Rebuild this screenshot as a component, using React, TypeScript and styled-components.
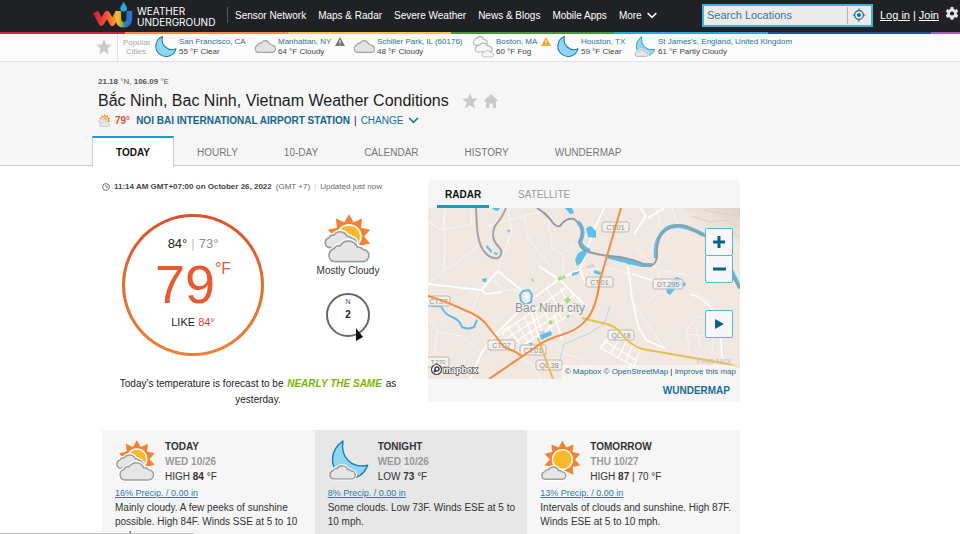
import React from "react";
import styled, { createGlobalStyle } from "styled-components";

const GlobalStyle = createGlobalStyle`
  *, *::before, *::after { box-sizing: border-box; }
  body {
    margin: 0;
    background: #fff;
    color: #222;
    font-family: "Liberation Sans", Arial, sans-serif;
    font-size: 10px;
  }
  button, input { font: inherit; margin: 0; }
  button { background: none; border: 0; padding: 0; cursor: pointer; }
  a { color: #1a6d97; text-decoration: none; }
  h1, h2, p { margin: 0; }
  svg { display: block; flex: none; }
`;

/* ---------- shell ---------- */

const Page = styled.div`
  height: 100vh;
  overflow: hidden;
`;

const Header = styled.header`
  display: flex;
  align-items: center;
  height: 32px;
  padding: 0 1px 2px 93px;
  background: #1f2125;
  color: #fff;
`;

const Rainbow = styled.div`
  height: 2px;
  background: linear-gradient(
    to right,
    #d3243c 0 13%,
    #f58a4e 13% 30%,
    #fcc14e 30% 47%,
    #4c9440 47% 64%,
    #2aa8e0 64% 80%,
    #24519f 80% 97%,
    #b05cb0 97%
  );
`;

const Brand = styled.a`
  display: flex;
  align-items: center;
  gap: 4px;
  width: 120px;
  color: #fff;
`;

const BrandName = styled.span`
  padding-top: 4px;
  font: 400 10px/11px Inter, sans-serif;
`;

const Nav = styled.nav`
  display: flex;
  align-items: center;
  gap: 12px;
  margin-left: 14px;
  padding-left: 7px;
  height: 16px;
  border-left: 1px solid #55575b;
`;

const NavLink = styled.a`
  color: #fff;
  white-space: nowrap;
`;

const NavButton = styled.button`
  display: flex;
  align-items: center;
  gap: 5px;
  color: #fff;
`;

const Account = styled.div`
  display: flex;
  align-items: center;
  margin-left: auto;
  font-size: 11px;
`;

const SearchBox = styled.form`
  display: flex;
  align-items: center;
  width: 171px;
  height: 23px;
  margin: 0 7px 0 0;
  border: 2px solid #3bb3de;
  background: #ebebeb;
`;

const SearchInput = styled.input`
  flex: 1;
  min-width: 0;
  height: 17px;
  padding: 0 3px;
  border: 0;
  border-right: 1px solid #b5b5b5;
  outline: 0;
  background: transparent;
  color: #22688f;
  &::placeholder { color: #3a769b; opacity: 1; }
`;

const LocateButton = styled.button`
  display: grid;
  place-items: center;
  width: 23px;
  color: #1a6d97;
`;

const AccountLink = styled.a`
  color: #fff;
  text-decoration: underline;
`;

const AccountDivider = styled.span`
  margin: 0 3px;
`;

const GearButton = styled.button`
  margin: 0 0 2px 6px;
  color: #e4e4e4;
`;

/* ---------- popular cities ---------- */

const CityStrip = styled.div`
  display: flex;
  align-items: center;
  height: 28px;
  padding: 0 0 2px 96px;
  border-bottom: 1px solid #e2e2e2;
  background: #fcfcfc;
`;

const StripLabel = styled.span`
  align-self: flex-start;
  width: 32px;
  height: 27px;
  margin: 0 6px 0 5px;
  padding: 4px 0 0 5px;
  border-left: 1px solid #e2e2e2;
  color: #a9a9a9;
  font-size: 8px;
  line-height: 9px;
  text-align: center;
`;

const CityList = styled.div`
  display: grid;
  grid-template-columns: 99px 99px 119px 85px 77px auto;
`;

const City = styled.a`
  display: flex;
  align-items: center;
  gap: 2px;
  color: #444;
  font-size: 8px;
  line-height: 10px;
  white-space: nowrap;
`;

const CityName = styled.span`
  display: flex;
  align-items: center;
  gap: 4px;
  height: 10px;
  color: #2b7396;
`;

/* ---------- location heading ---------- */

const LocationBand = styled.section`
  padding: 14px 0 0 92px;
  border-bottom: 1px solid #cfcfcf;
  background: #f6f6f6;
`;

const LocationInfo = styled.div`
  padding-left: 6px;
`;

const Coordinates = styled.p`
  color: #555;
  font-size: 8px;
  line-height: 12px;
`;

const TitleRow = styled.div`
  display: flex;
  align-items: center;
  gap: 5px;
  height: 25px;
`;

const Title = styled.h1`
  margin-right: 8px;
  color: #1b1b1b;
  font-size: 16px;
  font-weight: 400;
  line-height: 24px;
`;

const StationRow = styled.div`
  display: flex;
  align-items: center;
  height: 14px;
  margin-bottom: 9px;
  gap: 4px;
`;

const StationTemp = styled.strong`
  color: #e2532f;
  margin-right: 2px;
`;

const StationLink = styled.a`
  color: #14658f;
  font-weight: 700;
`;

const ChangeButton = styled.button`
  display: flex;
  align-items: center;
  gap: 5px;
  color: #1a6d97;
`;

const Tabs = styled.nav`
  display: flex;
  height: 30px;
  margin-bottom: -1px;
`;

const Tab = styled.a<{ $active?: boolean }>`
  display: flex;
  align-items: center;
  height: 31px;
  padding: 0 ${(p) => (p.$active ? "23px" : "22px")};
  border: 1px solid ${(p) => (p.$active ? "#cfcfcf" : "transparent")};
  border-top: 2px solid ${(p) => (p.$active ? "#1b9ac8" : "transparent")};
  border-bottom: 0;
  background: ${(p) => (p.$active ? "#fff" : "transparent")};
  color: ${(p) => (p.$active ? "#111" : "#777")};
  font-weight: ${(p) => (p.$active ? 700 : 400)};
`;

/* ---------- current conditions ---------- */

const Main = styled.main`
  max-width: 740px;
  padding: 14px 0 0 102px;
`;

const Columns = styled.div`
  display: grid;
  grid-template-columns: 1fr 1fr;
  gap: 14px;
  margin-bottom: 22px;
`;

const Updated = styled.p`
  display: flex;
  align-items: center;
  gap: 4px;
  height: 13px;
  margin-bottom: 21px;
  color: #666;
  font-size: 8px;
  white-space: nowrap;
  strong { color: #444; }
`;

const Conditions = styled.div`
  display: flex;
  gap: 51px;
  padding-left: 20px;
`;

const Dial = styled.div`
  display: flex;
  flex-direction: column;
  align-items: center;
  justify-content: center;
  width: 142px;
  height: 142px;
  padding-bottom: 6px;
  border: 3px solid transparent;
  border-radius: 50%;
  background: linear-gradient(#fff, #fff) padding-box,
    linear-gradient(#d9532d, #ef8237) border-box;
`;

const DialRange = styled.div`
  display: flex;
  gap: 4px;
  color: #222;
  font-size: 13px;
  line-height: 16px;
`;

const Muted = styled.span`
  color: #8d8d8d;
`;

const Pipe = styled.span`
  color: #c9c9c9;
`;

const Temperature = styled.div`
  display: flex;
  align-items: flex-start;
  margin: 5px 0 4px;
  color: #ea5a30;
  font-size: 54px;
  line-height: 54px;
`;

const TemperatureUnit = styled.span`
  font-size: 16px;
  line-height: 24px;
`;

const FeelsLike = styled.div`
  font-size: 11px;
  line-height: 14px;
  color: #222;
`;

const FeelsLikeValue = styled.span`
  color: #d1443c;
`;

const Side = styled.div`
  display: flex;
  flex-direction: column;
  align-items: center;
  width: 66px;
`;

const Phrase = styled.p`
  margin-bottom: 15px;
  line-height: 14px;
  white-space: nowrap;
  color: #333;
`;

const Wind = styled.div`
  position: relative;
  display: flex;
  flex-direction: column;
  align-items: center;
  width: 44px;
  height: 44px;
  padding-top: 3px;
  border: 2px solid #666;
  border-radius: 50%;
  font-weight: 700;
  line-height: 18px;
`;

const WindNorth = styled.span`
  color: #554466;
  font-size: 7px;
  font-weight: 400;
  line-height: 8px;
`;

const WindArrow = styled.svg`
  position: absolute;
  right: 5px;
  bottom: -6px;
`;

const Comparison = styled.p`
  margin-top: 20px;
  color: #222;
  line-height: 16px;
  text-align: center;
`;

const Trend = styled.em`
  padding: 0 1px;
  color: #7ab800;
  font-weight: 700;
`;

/* ---------- map panel ---------- */

const MapPanel = styled.section`
  align-self: start;
  background: #f6f6f6;
`;

const MapTabs = styled.div`
  display: flex;
  gap: 21px;
  height: 28px;
  padding-left: 9px;
`;

const MapTab = styled.button<{ $active?: boolean }>`
  padding: 4px 8px 0;
  border-bottom: 3px solid ${(p) => (p.$active ? "#1f97c4" : "transparent")};
  color: ${(p) => (p.$active ? "#111" : "#999")};
  font-weight: ${(p) => (p.$active ? 700 : 400)};
`;

const MapView = styled.div`
  position: relative;
  height: 171px;
`;

const MapControls = styled.div`
  position: absolute;
  top: 20px;
  right: 7px;
  display: flex;
  flex-direction: column;
  gap: 27px;
`;

const ZoomButtons = styled.div`
  display: flex;
  flex-direction: column;
`;

const MapButton = styled.button`
  display: grid;
  place-items: center;
  width: 28px;
  height: 28px;
  border: 1px solid #58b7d3;
  border-radius: 2px;
  background: #f7f7f7;
  & + & { margin-top: -1px; }
`;

const Attribution = styled.div`
  position: absolute;
  right: 0;
  bottom: 0;
  padding: 0 4px 0 3px;
  background: rgba(255, 255, 255, 0.5);
  font-size: 8px;
  line-height: 14px;
  white-space: nowrap;
`;

const MapboxMark = styled.div`
  position: absolute;
  left: 2px;
  bottom: 3px;
`;

const MapFooter = styled.div`
  display: flex;
  justify-content: flex-end;
  padding-right: 10px;
  font-weight: 700;
  line-height: 23px;
`;

/* ---------- forecast ---------- */

const Forecast = styled.section`
  display: grid;
  grid-template-columns: repeat(3, 1fr);
`;

const Card = styled.article<{ $shaded?: boolean }>`
  padding: 10px 0 10px 13px;
  background: ${(p) => (p.$shaded ? "#e7e7e7" : "#f6f6f6")};
  color: #333;
`;

const CardHead = styled.div`
  display: flex;
  gap: 8px;
  height: 46px;
  line-height: 15px;
`;

const CardTitle = styled.h2`
  color: #333;
  font-size: 10px;
  line-height: 14px;
`;

const CardDate = styled.p`
  color: #999;
  font-weight: 700;
`;

const Precip = styled.a`
  display: block;
  color: #2b7f9f;
  font-size: 9px;
  line-height: 15px;
  text-decoration: underline;
`;

const Summary = styled.p`
  font-size: 10px;
  line-height: 14px;
`;

const StatusEdge = styled.div`
  position: fixed;
  left: 0;
  bottom: 0;
  width: 194px;
  height: 1px;
  background: #c4c4c4;
`;

/* ---------- drawings ---------- */

type Sky = "moon" | "cloud" | "fog" | "mooncloud" | "mostly" | "partly";

const CLOUD =
  "M21 62A19 19 0 0 1 20 25A15 15 0 0 1 38 16A28 28 0 0 1 88 20A15 15 0 0 1 104 26A18 18 0 0 1 104 62Z";
const MOON = "M50 4A68 68 0 1 0 140 84A66 66 0 0 1 50 4Z";

function sunPoints(cx: number, cy: number) {
  return Array.from({ length: 20 }, (_, i) => {
    const r = i % 2 ? 44 : 65;
    const a = (i * Math.PI) / 10 - Math.PI / 2;
    return `${(cx + r * Math.cos(a)).toFixed(1)},${(cy + r * Math.sin(a)).toFixed(1)}`;
  }).join(" ");
}

function Cloud({ x, y, s, halo = "#fff" }: { x: number; y: number; s: number; halo?: string }) {
  return (
    <g transform={`translate(${x} ${y}) scale(${s})`} strokeLinejoin="round">
      <path d={CLOUD} fill={halo} stroke={halo} strokeWidth={13 / s} />
      <path d={CLOUD} fill="#e6e6e6" stroke="#9d9d9d" strokeWidth={5 / s} />
    </g>
  );
}

function Sun({ cx, cy }: { cx: number; cy: number }) {
  return (
    <g>
      <polygon points={sunPoints(cx, cy)} fill="#f58233" />
      <circle cx={cx} cy={cy} r="37" fill="#fff" />
      <circle cx={cx} cy={cy} r="32" fill="#fdb82a" />
    </g>
  );
}

function SkyIcon({ sky, size, halo }: { sky: Sky; size: number; halo?: string }) {
  return (
    <svg width={size} height={size} viewBox="0 0 146 146" aria-hidden="true">
      {sky === "moon" && (
        <path d={MOON} fill="#8fd6f3" stroke="#1c7fa9" strokeWidth="7" strokeLinejoin="round" />
      )}
      {sky === "cloud" && (
        <g transform="translate(2 28) scale(1.15 1.3)">
          <path d={CLOUD} fill="#e3e3e3" stroke="#a3a3a3" strokeWidth="6" />
        </g>
      )}
      {sky === "fog" && (
        <g fill="#f6f6f6" stroke="#b0b0b0" strokeWidth="7">
          <path d={CLOUD} transform="translate(4 0) scale(.8 1)" />
          <path d={CLOUD} transform="translate(14 44) scale(.98 1)" />
          <path d={CLOUD} transform="translate(62 94) scale(.66 .72)" />
        </g>
      )}
      {sky === "mooncloud" && (
        <>
          <path
            d="M52 4C8 34 4 90 40 120C76 146 122 132 138 88C84 100 42 62 52 4Z"
            fill="#8fd6f3"
            stroke="#1c7fa9"
            strokeWidth="5"
            strokeLinejoin="round"
          />
          <Cloud x={2} y={88} s={0.76} halo={halo} />
        </>
      )}
      {sky === "mostly" && (
        <>
          <Sun cx={76} cy={66} />
          <Cloud x={2} y={50} s={0.78} halo={halo} />
          <Cloud x={12} y={77} s={1} halo={halo} />
        </>
      )}
      {sky === "partly" && (
        <>
          <Sun cx={78} cy={68} />
          <Cloud x={2} y={92} s={0.72} halo={halo} />
        </>
      )}
    </svg>
  );
}

function Logo() {
  return (
    <svg width="40" height="28" viewBox="0 0 120 84" aria-hidden="true">
      <defs>
        <linearGradient id="w" x1="0" x2="1">
          <stop offset="0" stopColor="#d81f3f" />
          <stop offset=".5" stopColor="#ee5b2e" />
          <stop offset="1" stopColor="#fbb034" />
        </linearGradient>
        <linearGradient id="u" x1="0" x2="1">
          <stop offset="0" stopColor="#fdb931" />
          <stop offset=".35" stopColor="#7fb04c" />
          <stop offset=".6" stopColor="#1b7fc4" />
          <stop offset="1" stopColor="#2f6fd0" />
        </linearGradient>
      </defs>
      <path d="M8 33L25 66L42 38L58 66L76 33" fill="none" stroke="url(#w)" strokeWidth="17" strokeLinejoin="round" />
      <path d="M76 30V50Q76 71 92 71Q109 71 109 50V30" fill="none" stroke="url(#u)" strokeWidth="17" />
      <path d="M92 2C97 12 102 16 102 22A10 10 0 0 1 82 22C82 16 87 12 92 2Z" fill="#2ba6de" />
    </svg>
  );
}

function Chevron({ size = 10 }: { size?: number }) {
  return (
    <svg width={size} height="7" viewBox="0 0 10 7" fill="none" stroke="currentColor" strokeWidth="1.5" aria-hidden="true">
      <path d="M.6 1L5 5.4L9.4 1" />
    </svg>
  );
}

function Star({ size }: { size: number }) {
  return (
    <svg width={size} height={size} viewBox="0 0 20 20" fill="#cacaca" aria-hidden="true">
      <path d="M10 0L12.7 6.900L20 7.300L14.300 12L16.200 19.200L10 15.200L3.800 19.200L5.700 12L0 7.300L7.300 6.900Z" />
    </svg>
  );
}

function Home() {
  return (
    <svg width="16" height="16" viewBox="0 0 16 16" fill="#cacaca" aria-hidden="true">
      <path d="M8 1L15.5 8.3H13V15H9.7V10.5H6.3V15H3V8.3H.5Z" />
    </svg>
  );
}

function Target() {
  return (
    <svg width="14" height="14" viewBox="0 0 14 14" fill="none" stroke="currentColor" strokeWidth="1.2" aria-hidden="true">
      <circle cx="7" cy="7" r="4.4" />
      <path d="M7 .6V2.6M7 11.4V13.4M.6 7H2.6M11.4 7H13.4" />
      <circle cx="7" cy="7" r="2" fill="currentColor" stroke="none" />
    </svg>
  );
}

function Gear() {
  return (
    <svg width="14" height="14" viewBox="0 0 24 24" fill="currentColor" fillRule="evenodd" aria-hidden="true">
      <path d="M9.6 0h4.8l.7 3.4 2 1.1 3.2-1.1 2.4 4.2-2.5 2.2v2.4l2.5 2.2-2.4 4.2-3.2-1.1-2 1.1-.7 3.4H9.6l-.7-3.4-2-1.1-3.2 1.1-2.4-4.2 2.5-2.2V9.8L1.3 7.6l2.4-4.2 3.2 1.1 2-1.1zM12 7.5a3.6 3.600 0 1 0 0 7.200a3.600 3.600 0 1 0 0-7.200z" />
    </svg>
  );
}

function Alert({ color }: { color: string }) {
  return (
    <svg width="10" height="9" viewBox="0 0 20 18" aria-hidden="true">
      <path d="M10 0L20 18H0Z" fill={color} />
      <path d="M10 6V12M10 13.5V15.5" stroke="#fff" strokeWidth="2" />
    </svg>
  );
}

function Clock() {
  return (
    <svg width="8" height="8" viewBox="0 0 16 16" fill="none" stroke="#777" strokeWidth="2" aria-hidden="true">
      <circle cx="8" cy="8" r="6.8" />
      <path d="M8 4V8.5H12" />
    </svg>
  );
}

const MINOR_ROADS = [
  "M16 0L17 40L16 62L0 76M16 62L30 54L52 36",
  "M42 0L44 16L14 22L0 14M14 22L18 0",
  "M70 62L76 44L84 24L80 0M76 44L82 40L80 28",
  "M66 66L68 74L76 82L92 82M50 84L44 104L46 112",
  "M134 68L136 54L134 46L146 36M111 58L136 74L146 90",
  "M158 62L180 60L204 66",
  "M208 40L230 62L232 82L218 96M232 62L262 68",
  "M232 20L228 0M252 22L244 0M200 24L190 8",
  "M262 82L280 92L290 112L294 130",
  "M300 114L270 108L258 122L262 142",
  "M246 152L222 120L206 96",
  "M0 110L10 124L34 128L50 142M10 124L6 140L22 158",
  "M128 134L136 146L152 150L164 171",
  "M92 150L106 158L112 171M206 150L196 171",
  "M268 118L272 140M286 118L284 146M258 126L296 130",
  "M60 18L96 8L112 4M96 8L100 30L122 58",
  "M120 10L124 40L134 46",
];

const MAJOR_ROADS = [
  "M0 76L53 82L70 63L98 86L112 134",
  "M53 82L58 86L74 84",
  "M42 171L54 144L68 126L100 94L130 72L146 64",
  "M146 64L152 62L166 22L176 0M158 44L152 62L158 76",
  "M111 58L134 74L156 96",
  "M200 58L204 90L210 118L218 132L236 140",
  "M204 66L236 76M262 86Q284 92 292 118L294 150",
  "M126 106L134 132",
  "M206 26L218 8L212 0M220 10L236 0",
];

const CITY_BLOCKS = [
  "M70 128L140 78M76 132L148 86M84 136L152 92M94 138L154 98",
  "M80 120L92 136M88 114L100 134M96 108L106 132M106 100L116 130M114 94L124 124M124 88L134 112M132 80L144 102M118 80L130 98",
  "M76 128Q72 120 84 118",
  "M172 140L184 124L212 142L206 158ZM178 134L208 152M184 128L172 140M192 130L182 146M198 134L190 150M204 138L198 154",
];

const RIVER_WEST = "M48 0L49 20Q50 34 55 42Q62 52 70 50Q77 45 70 38Q62 30 67 18Q74 10 78 0";
const RIVER_EAST =
  "M109 0Q116 4 122 11Q128 20 132 18Q138 9 146 11Q156 18 154 28Q148 38 158 43Q172 48 192 49Q208 52 217 57Q228 60 229 48Q228 30 236 23Q246 15 258 18L277 28Q292 40 304 67L312 80";

const SHIELDS: Array<[number, number, number, string]> = [
  [174, 14, 27, "CT.01"],
  [158, 69, 27, "CT.01"],
  [225, 71, 30, "DT.295"],
  [-1, 88, 23, "CT.07"],
  [60, 132, 27, "CT.07"],
  [92, 137, 26, "CT.01"],
  [108, 152, 26, "QL.38"],
  [180, 122, 26, "QL.18"],
];

function CityMap() {
  return (
    <svg width="100%" height="100%" viewBox="0 0 312 171" preserveAspectRatio="xMidYMid slice" role="img" aria-label="Map of Bac Ninh city">
      <defs>
        <linearGradient id="hill" x1="0" y1="1" x2="1" y2="0">
          <stop offset=".3" stopColor="#e6dcd2" stopOpacity="0" />
          <stop offset="1" stopColor="#dcd1c6" />
        </linearGradient>
      </defs>
      <rect width="312" height="171" fill="#f0e8e1" />
      <path d="M256 0H312V36L290 26L270 20Z" fill="url(#hill)" />
      <path d="M264 8L282 14L298 12L312 20M276 2L296 6L312 8M284 20L300 22L312 30" fill="none" stroke="#dccfc3" strokeWidth="1" />

      <g fill="none" stroke="#f9f6f4" strokeWidth="1">
        {MINOR_ROADS.map((d) => (
          <path key={d} d={d} />
        ))}
      </g>
      <g fill="none" stroke="#fff" strokeWidth="1.2">
        {CITY_BLOCKS.map((d) => (
          <path key={d} d={d} />
        ))}
      </g>
      <g fill="none" stroke="#fff" strokeWidth="1.8">
        {MAJOR_ROADS.map((d) => (
          <path key={d} d={d} />
        ))}
      </g>
      <path
        d="M136 92l4-3 3 3-4 4zM129 70l4-2 2 3-4 2zM134 68l3-1 1 3-3 1zM120 114l3-2 2 3-3 2zM138 108l3-2 1 3-3 1zM103 71l2-1 1 3-2 1zM110 101l3-1 1 3-3 1z"
        fill="#a5dc8c"
      />
      <path d="M158 58l7-2 2 3-8 2zM111 124l5-2 1 4-5 2z" fill="#e7c9dc" />

      <g fill="none" stroke="#5cbfe8">
        <path d="M0 97Q6 99 13 98Q16 106 24 109Q32 112 34 119Q40 122 46 119L49 112" strokeWidth="2" />
        <path d="M150 14Q158 22 152 34Q154 40 162 43M228 50Q226 30 238 21Q250 13 276 27M178 48L214 57L224 57M302 60L312 80" strokeWidth="4" />
        <path d="M95 83l6-1 3 5-1 7-6 3-4-4-1-6z" strokeWidth="2" />
        <path d="M132 152L136 136L160 126L176 116L182 98" strokeWidth="1" opacity=".4" />
      </g>
      <path
        d="M158 20l5-2 5 5v7l-8-1zM147 52l3-7 6-3 3 3-6 10-4 3zM137 0h7l2 5-4 1zM64 0h8l-2 3-4-1zM112 127l11-4 1 4-11 5zM238 79l4-4 6-6 4 1 0 4 6 1-1 3-8 1-7 8-3-2zM59 37l5 6-1 2-5-6zM66 44l4 1-1 2-3-1zM54 71l5-1-1 4-3 0zM144 65l8-2-2 3-6 2zM166 62l7 2-1 3-6-2zM199 54l5 1-1 2-4-1zM79 22l3 0-1 3zM101 135l4 0-2 3z"
        fill="#5cbfe8"
      />
      <path d={RIVER_WEST} fill="none" stroke="#a0a3a8" strokeWidth="2" />
      <path d={RIVER_EAST} fill="none" stroke="#949ba3" strokeWidth="2" />

      <g fontFamily="Liberation Sans" fontWeight="400" fontSize="7" fill="#8d8d8d" textAnchor="middle">
        {SHIELDS.map(([x, y, width, label]) => (
          <g key={`${x}-${y}`}>
            <rect x={x} y={y} width={width} height="10" rx="2" fill="#f5f1ed" fillOpacity=".8" stroke="#b9b7b5" strokeWidth="1" />
            <text x={x + width / 2} y={y + 8}>{label}</text>
          </g>
        ))}
        <rect x="-4" y="149" width="25" height="10" rx="2" fill="#f5f1ed" stroke="#b9b7b5" strokeWidth="1" />
        <text x="10" y="156" fontSize="6">T.270</text>
      </g>

      <g fill="none" stroke="#e9c04c" strokeWidth="2">
        <path d="M154 110L170 114Q184 116 190 122Q202 138 214 141L260 149Q292 154 312 159" />
        <path d="M110 130L125 171" />
      </g>
      <g fill="none" stroke="#f28d46" strokeWidth="2">
        <path d="M193 0L172 72Q168 102 158 112Q150 122 136 126Q116 132 108 139L61 171" />
        <path d="M0 88Q20 94 34 101Q54 108 62 121L76 139L88 144L93 148" />
      </g>

      <g fontFamily="Liberation Sans" textAnchor="middle">
        <text x="122" y="104" fontSize="12" fill="#929292" stroke="#f4f0ec" strokeWidth="2" paintOrder="stroke">Bac Ninh city</text>
        <text x="286" y="156" fontSize="8" fill="#c8c1c4">PHO MOI</text>
      </g>
    </svg>
  );
}

function MapboxLogo() {
  return (
    <svg width="52" height="13" viewBox="0 0 52 13" role="img" aria-label="mapbox">
      <circle cx="6.5" cy="6.5" r="5" fill="#fff" stroke="#444" strokeWidth="1.2" />
      <circle cx="7" cy="6" r="2" fill="none" stroke="#444" strokeWidth="1.6" />
      <path d="M3.5 9.5L4 6L7 9Z" fill="#444" />
      <text x="13" y="10" fontFamily="Liberation Sans" fontWeight="700" fontSize="9" fill="#fff" stroke="#555" strokeWidth="1.500" paintOrder="stroke">
        mapbox
      </text>
    </svg>
  );
}

/* ---------- data ---------- */

const NAV = ["Sensor Network", "Maps & Radar", "Severe Weather", "News & Blogs", "Mobile Apps"];

const CITIES: Array<{ name: string; now: string; sky: Sky; alert?: string }> = [
  { name: "San Francisco, CA", now: "55 °F Clear", sky: "moon" },
  { name: "Manhattan, NY", now: "64 °F Cloudy", sky: "cloud", alert: "#777" },
  { name: "Schiller Park, IL (60176)", now: "48 °F Cloudy", sky: "cloud" },
  { name: "Boston, MA", now: "60 °F Fog", sky: "fog", alert: "#f5a623" },
  { name: "Houston, TX", now: "59 °F Clear", sky: "moon" },
  { name: "St James's, England, United Kingdom", now: "61 °F Partly Cloudy", sky: "mooncloud" },
];

const TABS = ["TODAY", "HOURLY", "10-DAY", "CALENDAR", "HISTORY", "WUNDERMAP"];

const FORECAST: Array<{
  title: string;
  date: string;
  label: string;
  value: string;
  rest: string;
  precip: string;
  text: string;
  sky: Sky;
  shaded?: boolean;
}> = [
  {
    title: "TODAY",
    date: "WED 10/26",
    label: "HIGH",
    value: "84",
    rest: "°F",
    precip: "16% Precip. / 0.00 in",
    text: "Mainly cloudy. A few peeks of sunshine possible. High 84F. Winds SSE at 5 to 10 mph.",
    sky: "mostly",
  },
  {
    title: "TONIGHT",
    date: "WED 10/26",
    label: "LOW",
    value: "73",
    rest: "°F",
    precip: "8% Precip. / 0.00 in",
    text: "Some clouds. Low 73F. Winds ESE at 5 to 10 mph.",
    sky: "mooncloud",
    shaded: true,
  },
  {
    title: "TOMORROW",
    date: "THU 10/27",
    label: "HIGH",
    value: "87",
    rest: " | 70 °F",
    precip: "13% Precip. / 0.00 in",
    text: "Intervals of clouds and sunshine. High 87F. Winds ESE at 5 to 10 mph.",
    sky: "partly",
  },
];

export default function App() {
  return (
    <Page>
      <GlobalStyle />
      <Header>
        <Brand href="#">
          <Logo />
          <BrandName>
            WEATHER
            <br />
            UNDERGROUND
          </BrandName>
        </Brand>
        <Nav>
          {NAV.map((item) => (
            <NavLink key={item} href="#">
              {item}
            </NavLink>
          ))}
          <NavButton>
            More <Chevron />
          </NavButton>
        </Nav>
        <Account>
          <SearchBox>
            <SearchInput aria-label="Search Locations" placeholder="Search Locations" />
            <LocateButton type="button" aria-label="Use my location">
              <Target />
            </LocateButton>
          </SearchBox>
          <AccountLink href="#">Log in</AccountLink>
          <AccountDivider>|</AccountDivider>
          <AccountLink href="#">Join</AccountLink>
          <GearButton aria-label="Settings">
            <Gear />
          </GearButton>
        </Account>
      </Header>
      <Rainbow />

      <CityStrip>
        <Star size={16} />
        <StripLabel>Popular Cities</StripLabel>
        <CityList>
          {CITIES.map((c) => (
            <City key={c.name} href="#">
              <SkyIcon sky={c.sky} size={22} />
              <span>
                <CityName>
                  {c.name}
                  {c.alert && <Alert color={c.alert} />}
                </CityName>
                {c.now}
              </span>
            </City>
          ))}
        </CityList>
      </CityStrip>

      <LocationBand>
        <LocationInfo>
          <Coordinates>
            <strong>21.18</strong> °N, <strong>106.09</strong> °E
          </Coordinates>
          <TitleRow>
            <Title>Bắc Ninh, Bac Ninh, Vietnam Weather Conditions</Title>
            <Star size={16} />
            <Home />
          </TitleRow>
          <StationRow>
            <SkyIcon sky="mostly" size={13} />
            <StationTemp>79°</StationTemp>
            <StationLink href="#">NOI BAI INTERNATIONAL AIRPORT STATION</StationLink>
            <span>|</span>
            <ChangeButton>
              CHANGE <Chevron size={11} />
            </ChangeButton>
          </StationRow>
        </LocationInfo>
        <Tabs>
          {TABS.map((t, i) => (
            <Tab key={t} href="#" $active={i === 0}>
              {t}
            </Tab>
          ))}
        </Tabs>
      </LocationBand>

      <Main>
        <Columns>
          <section>
            <Updated>
              <Clock />
              <strong>11:14 AM GMT+07:00 on October 26, 2022</strong>
              <span>(GMT +7)</span>
              <Pipe>|</Pipe>
              <span>Updated just now</span>
            </Updated>
            <Conditions>
              <Dial>
                <DialRange>
                  <span>84°</span>
                  <Pipe>|</Pipe>
                  <Muted>73°</Muted>
                </DialRange>
                <Temperature>
                  79<TemperatureUnit>°F</TemperatureUnit>
                </Temperature>
                <FeelsLike>
                  LIKE <FeelsLikeValue>84°</FeelsLikeValue>
                </FeelsLike>
              </Dial>
              <Side>
                <SkyIcon sky="mostly" size={50} />
                <Phrase>Mostly Cloudy</Phrase>
                <Wind>
                  <WindNorth>N</WindNorth>
                  2
                  <WindArrow width="8" height="13" viewBox="0 0 8 13" aria-hidden="true">
                    <path d="M1 0L8 9L1 13Z" fill="#111" />
                  </WindArrow>
                </Wind>
              </Side>
            </Conditions>
            <Comparison>
              Today's temperature is forecast to be <Trend>NEARLY THE SAME</Trend> as yesterday.
            </Comparison>
          </section>

          <MapPanel>
            <MapTabs>
              <MapTab $active>RADAR</MapTab>
              <MapTab>SATELLITE</MapTab>
            </MapTabs>
            <MapView>
              <CityMap />
              <MapControls>
                <ZoomButtons>
                  <MapButton aria-label="Zoom in">
                    <svg width="12" height="12" viewBox="0 0 12 12" stroke="#0f6089" strokeWidth="3" aria-hidden="true">
                      <path d="M6 0V12M0 6H12" />
                    </svg>
                  </MapButton>
                  <MapButton aria-label="Zoom out">
                    <svg width="13" height="12" viewBox="0 0 13 12" stroke="#0f6089" strokeWidth="3" aria-hidden="true">
                      <path d="M0 6H13" />
                    </svg>
                  </MapButton>
                </ZoomButtons>
                <MapButton aria-label="Play">
                  <svg width="9" height="10" viewBox="0 0 9 10" fill="#0f6089" aria-hidden="true">
                    <path d="M0 0L9 5L0 10Z" />
                  </svg>
                </MapButton>
              </MapControls>
              <MapboxMark>
                <MapboxLogo />
              </MapboxMark>
              <Attribution>
                <a href="#">© Mapbox</a> <a href="#">© OpenStreetMap</a> | <a href="#">Improve this map</a>
              </Attribution>
            </MapView>
            <MapFooter>
              <a href="#">WUNDERMAP</a>
            </MapFooter>
          </MapPanel>
        </Columns>

        <Forecast>
          {FORECAST.map((f) => (
            <Card key={f.title} $shaded={f.shaded}>
              <CardHead>
                <SkyIcon sky={f.sky} size={42} halo={f.shaded ? "#f3f3f3" : "#fff"} />
                <div>
                  <CardTitle>{f.title}</CardTitle>
                  <CardDate>{f.date}</CardDate>
                  <p>
                    {f.label} <strong>{f.value}</strong> {f.rest}
                  </p>
                </div>
              </CardHead>
              <Precip href="#">{f.precip}</Precip>
              <Summary>{f.text}</Summary>
            </Card>
          ))}
        </Forecast>
      </Main>
      <StatusEdge />
    </Page>
  );
}
